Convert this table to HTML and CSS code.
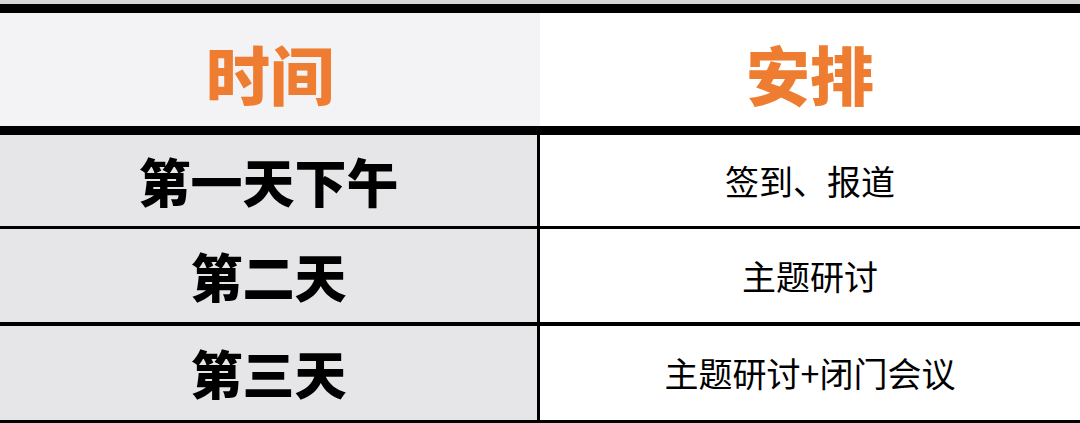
FILE: index.html
```html
<!DOCTYPE html>
<html lang="zh">
<head>
<meta charset="utf-8">
<link rel="stylesheet" href="styles.css">
</head>
<body>
<div class="sheet">
  <div class="row head">
    <div class="cell left">时间</div>
    <div class="cell right">安排</div>
  </div>
  <div class="row body r1">
    <div class="cell left">第一天下午</div>
    <div class="cell right">签到、报道</div>
  </div>
  <div class="row body r2">
    <div class="cell left">第二天</div>
    <div class="cell right">主题研讨</div>
  </div>
  <div class="row body r3">
    <div class="cell left">第三天</div>
    <div class="cell right">主题研讨+闭门会议</div>
  </div>
</div>
</body>
</html>
```
FILE: styles.css
```css
html, body {
  margin: 0;
  padding: 0;
  background: #ffffff;
}
body {
  width: 1080px;
  height: 423px;
  overflow: hidden;
  font-family: "Noto Sans CJK SC", "Noto Sans", sans-serif;
}
.sheet {
  border-top: 4px solid #d6d6d6;
}
.row {
  display: grid;
  grid-template-columns: 537px 1fr;
}
.cell {
  display: flex;
  align-items: center;
  justify-content: center;
  color: #000;
  line-height: 1;
}
.head {
  border-top: 9px solid #000;
  border-bottom: 9px solid #000;
  height: 113px;
  grid-template-columns: 540px 1fr;
}
.head .cell {
  color: #ee7d31;
  font-weight: 900;
  font-size: 64px;
  padding-top: 4px;
}
.head .left { background: #f3f2f5; }
.head .right { background: #ffffff; }
.body .left {
  background: #e6e5e8;
  font-weight: 900;
  font-size: 52px;
}
.body .right {
  background: #ffffff;
  border-left: 3px solid #000;
  font-size: 34px;
  font-weight: 400;
}
.r1 { height: 91px; border-bottom: 3px solid #000; }
.r2 { height: 93px; border-bottom: 4px solid #000; }
.r3 { height: 94px; border-bottom: 3px solid #000; }
```
